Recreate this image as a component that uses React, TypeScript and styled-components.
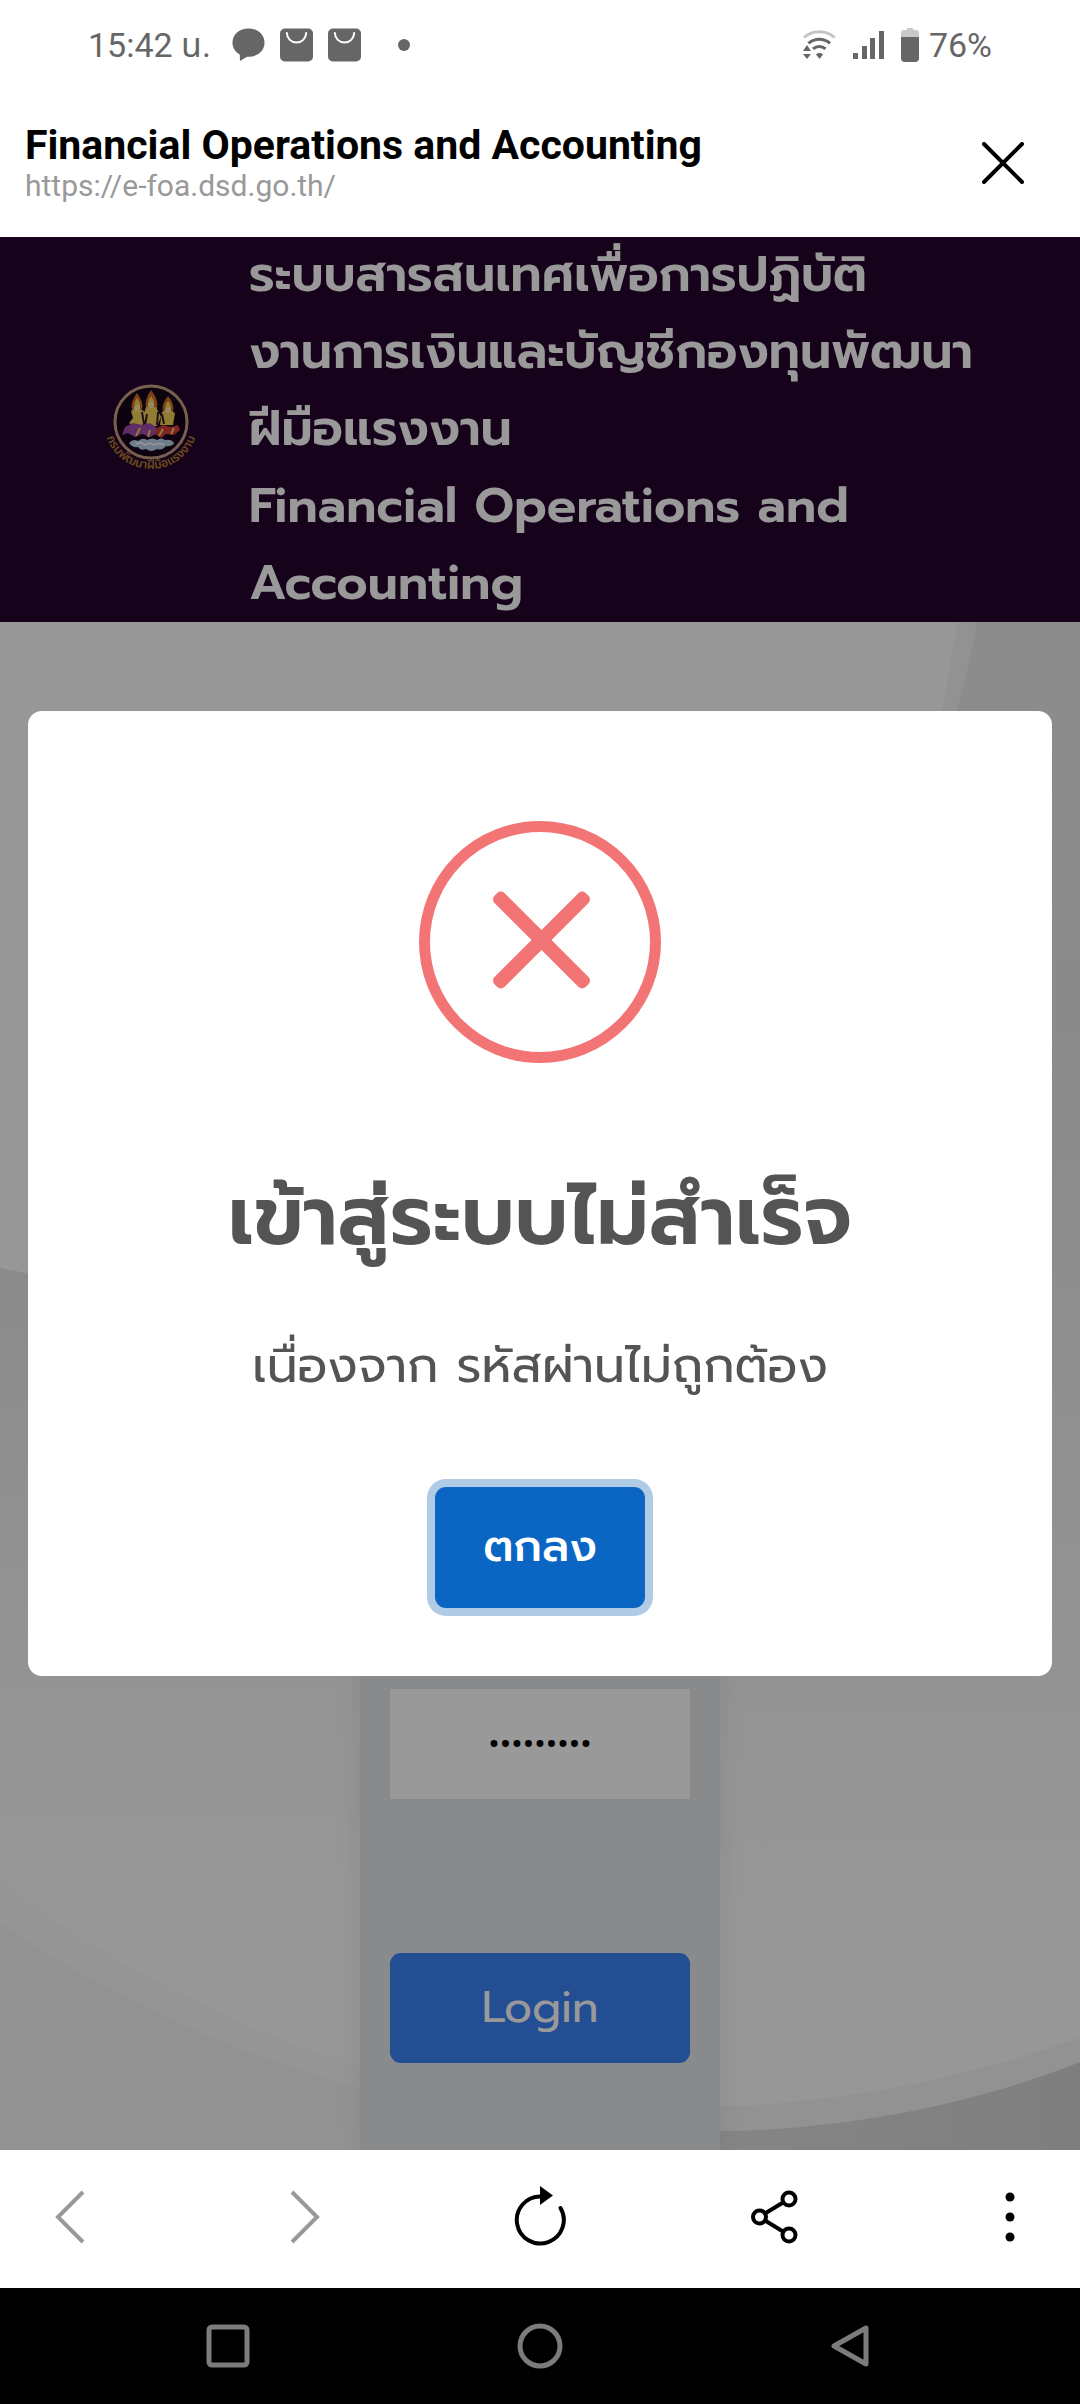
import React from 'react';
import styled, { createGlobalStyle } from 'styled-components';

const GlobalStyle = createGlobalStyle`
  *, *::before, *::after { box-sizing: border-box; }
  body { margin: 0; background: #fff; }
  button { font: inherit; border: 0; padding: 0; background: none; cursor: pointer; }
  svg { display: block; flex: none; }
`;

const thaiFont = `Prompt, "Noto Sans Thai", "Noto Sans", sans-serif`;
const systemFont = `Roboto, "Noto Sans Thai", sans-serif`;

const Screen = styled.div`
  display: flex;
  flex-direction: column;
  min-height: 100vh;
  font-family: ${systemFont};
`;

/* ---------- phone status bar ---------- */

const StatusBar = styled.div`
  display: flex;
  align-items: center;
  justify-content: space-between;
  height: 90px;
  padding: 0 88px;
  color: #666;
  font-size: 34px;
  line-height: 40px;
`;

const StatusGroup = styled.div<{ $gap: number }>`
  display: flex;
  align-items: center;
  gap: ${(p) => p.$gap}px;
`;

const Clock = styled.span`
  margin-right: 6px;
`;

const MoreDot = styled.span`
  width: 12px;
  height: 12px;
  margin-left: 22px;
  border-radius: 50%;
  background: #666;
`;

/* ---------- in-app browser header ---------- */

const AppBar = styled.header`
  display: flex;
  align-items: center;
  justify-content: space-between;
  height: 147px;
  padding: 0 45px 2px 25px;
`;

const PageTitle = styled.div`
  color: #000;
  font-size: 41px;
  font-weight: 700;
  line-height: 46px;
`;

const PageUrl = styled.div`
  color: #999;
  font-size: 30px;
  line-height: 36px;
`;

const IconButton = styled.button<{ $size: number }>`
  display: flex;
  align-items: center;
  justify-content: center;
  width: ${(p) => p.$size}px;
  height: ${(p) => p.$size}px;
`;

/* ---------- web page ---------- */

const WebView = styled.div`
  position: relative;
  display: flex;
  flex: 1;
  flex-direction: column;
  font-family: ${thaiFont};
`;

const SiteHeader = styled.header`
  display: flex;
  align-items: center;
  gap: 47px;
  padding: 0 102px;
  background: #26052e;
`;

const SiteTitle = styled.h1`
  margin: 0;
  color: #fff;
  font-size: 49px;
  font-weight: 600;
  line-height: 77px;
  white-space: nowrap;
`;

const Main = styled.main`
  position: relative;
  display: flex;
  flex: 1;
  justify-content: center;
  overflow: hidden;
  background: #fbfbfb;
`;

const Backdrop = styled.svg`
  position: absolute;
  inset: 0;
  width: 100%;
  height: 100%;
`;

const LoginPanel = styled.form`
  position: relative;
  display: flex;
  flex-direction: column;
  justify-content: flex-end;
  gap: 154px;
  width: 33.3333%;
  margin-top: 280px;
  padding: 30px 30px 87px;
  background: #e4e7e9;
  box-shadow: 0 0 28px rgba(0, 0, 0, 0.07);
`;

const PasswordInput = styled.input`
  width: 100%;
  height: 110px;
  border: 0;
  background: #fff;
  color: #000;
  font-family: ${systemFont};
  font-size: 34px;
  text-align: center;
`;

const LoginButton = styled.button`
  height: 110px;
  border-radius: 11px;
  background: #3b82f6;
  color: #fff;
  font-size: 44px;
  line-height: 66px;
`;

/* ---------- alert dialog ---------- */

const Overlay = styled.div`
  position: absolute;
  inset: 0;
  display: flex;
  align-items: center;
  justify-content: center;
  padding: 28px;
  background: rgba(0, 0, 0, 0.4);
`;

const Dialog = styled.div`
  display: flex;
  flex-direction: column;
  align-items: center;
  width: 100%;
  padding: 110px 44px 68px;
  border-radius: 14px;
  background: #fff;
  color: #545454;
  text-align: center;
`;

const DialogTitle = styled.h2`
  margin: 92px 0 0;
  font-size: 82px;
  font-weight: 600;
  line-height: 124px;
`;

const DialogText = styled.p`
  margin: 50px 0 0;
  font-size: 49px;
  line-height: 74px;
`;

const ConfirmButton = styled.button`
  margin-top: 84px;
  padding: 27px 48px 28px;
  border-radius: 11px;
  background: #0b66c3;
  box-shadow: 0 0 0 8px #b0cbe5;
  color: #fff;
  font-size: 44px;
  font-weight: 500;
  line-height: 66px;
`;

/* ---------- bottom bars ---------- */

const Toolbar = styled.nav`
  display: flex;
  align-items: center;
  justify-content: space-between;
  height: 138px;
  padding: 0 30px 4px;
  background: #fff;
`;

const SystemNav = styled.nav`
  display: flex;
  align-items: center;
  justify-content: space-around;
  height: 116px;
  padding: 0 72px;
  background: #000;
`;

const ChatIcon = () => (
  <svg width="33" height="34" viewBox="0 0 34 34" fill="#666">
    <path d="M17 0C7.600 0 .5 6.200.5 14.500c0 5.600 2.800 9.800 7.500 12.300L8.300 33.500 15.500 29.200C26 29.500 33.500 23.500 33.500 14.500 33.500 6.200 26.400 0 17 0z" />
  </svg>
);

const BagIcon = () => (
  <svg width="33" height="34" viewBox="0 0 34 34" fill="none">
    <rect width="34" height="34" rx="5" fill="#666" />
    <path d="M7 4.500c.3 6 4.500 10 10 10s9.700-4 10-10" stroke="#fff" strokeWidth="2" strokeLinecap="round" />
  </svg>
);

const WifiIcon = () => (
  <svg width="34" height="30" viewBox="0 0 34 30" fill="none" strokeWidth="3">
    <path d="M2 7.500C10.500-.2 24-.2 32.500 7.500" stroke="#c4c4c4" />
    <path d="M6.500 13.300c6-5.500 15.500-5.500 21.500 0M11 18.800c3.600-3.200 9-3.200 12.500 0" stroke="#666" />
    <path d="M5 15l4 6H1zM5 29l-4-5h8zM14 24.500a5 5 0 0 1 7 0L17.500 29z" fill="#666" />
  </svg>
);

const SignalIcon = () => (
  <svg width="31" height="28" viewBox="0 0 31 28" fill="#666">
    <path d="M0 22h5v6H0zM9 15h5v13H9zM17 7h5v21h-5zM26 0h5v28h-5z" />
  </svg>
);

const BatteryIcon = () => (
  <svg width="18" height="34" viewBox="0 0 18 34">
    <path d="M6 0h6v2h3a3 3 0 0 1 3 3v5H0V5a3 3 0 0 1 3-3h3z" fill="#c8c8c8" />
    <path d="M0 9h18v21a4 4 0 0 1-4 4H4a4 4 0 0 1-4-4z" fill="#666" />
  </svg>
);

const Emblem = () => (
  <svg width="100" height="92" viewBox="0 0 100 92" overflow="visible" role="img" aria-label="กรมพัฒนาฝีมือแรงงาน">
    <defs>
      <path id="emblem-arc" d="M2 38A47 47 0 0 0 96 38" />
    </defs>
    <circle cx="49" cy="38" r="36" fill="#16041c" stroke="#c9a183" strokeWidth="3" />
    <g fill="#d2691e">
      <path d="M35 9q-7 9-5 17h10q2-8-5-17zM49 6q-7 10-5 19h11q2-9-6-19zM66 12q-7 8-5 16h10q2-8-5-16z" />
    </g>
    <g fill="#f0cf55">
      <path d="M35 14q-4 5-2 9h5q1-4-3-9zM49 12q-4 6-2 10h5q1-5-3-10zM66 17q-4 4-2 8h5q1-4-3-8z" />
      <path d="M29 27l5-3 8 3 3 10-5 4-8 1-5-3 4-5zM44 23h10l5 10-4 9H44l-3-9zM60 28l6-3 7 4-2 12H58z" />
    </g>
    <g fill="#f7e6a0">
      <circle cx="35" cy="24" r="3" />
      <circle cx="49" cy="21" r="3" />
      <circle cx="66" cy="26" r="3" />
    </g>
    <path d="M40 28l2 12M45 30l-2 12M56 28l-1 13M60 30l2 10" stroke="#3a1c28" strokeWidth="2" fill="none" />
    <path d="M23 43l8-4 9 2 8-2 6 4 2 6-8 4-8-3-7 3-7-4-6 2z" fill="#a04cb0" />
    <path d="M53 45l8-4 8 2 7-2 2 5-6 5-8-1-5 4-6-4z" fill="#d13d3d" />
    <path d="M34 52l4-8M46 53l2-7M57 52l4-7M69 50l3-6" stroke="#f0cf55" strokeWidth="2" fill="none" />
    <path d="M27 59q4-5 9-2 5-4 9-1 6-3 10 0 5-3 8 0 8-1 9 4-4 3-8 2-4 5-9 3-6 4-11 0-6 2-8-2-6 1-9-4z" fill="#b7d0e4" />
    <path d="M34 60q5-3 9 1 5-3 9 0 5-3 10 0" stroke="#fff" strokeWidth="1.500" fill="none" />
    <text fill="#b37d30" fontSize="12" fontWeight="600" fontFamily={'"Noto Sans Thai", sans-serif'}>
      <textPath href="#emblem-arc" startOffset="50%" textAnchor="middle">กรมพัฒนาฝีมือแรงงาน</textPath>
    </text>
  </svg>
);

const PageBackdrop = () => (
  <Backdrop viewBox="0 0 1080 1528" preserveAspectRatio="none" aria-hidden="true">
    <defs>
      <linearGradient id="rightShade" x1="0" y1="0" x2="0" y2="1">
        <stop offset="0" stopColor="#e9e9e9" />
        <stop offset="0.3" stopColor="#e7e7e7" />
        <stop offset="1" stopColor="#fcfcfc" />
      </linearGradient>
      <linearGradient id="leftShade" x1="0" y1="0" x2="0" y2="1">
        <stop offset="0" stopColor="#e8e8e8" />
        <stop offset="0.6" stopColor="#f6f6f6" />
        <stop offset="1" stopColor="#fcfcfc" />
      </linearGradient>
      <linearGradient id="cornerShade" x1="0" y1="0" x2="1" y2="0">
        <stop offset="0" stopColor="#dedede" />
        <stop offset="1" stopColor="#d3d3d3" />
      </linearGradient>
    </defs>
    <rect width="1080" height="1528" fill="#fcfcfc" />
    <path d="M958 0H1080V1330H600C800 700 900 380 958 0z" fill="url(#rightShade)" />
    <path d="M958 0H977C969 42 963 66 957 89L700 900 942 89z" fill="#f4f4f4" />
    <path d="M0 646Q20 649 200 690L540 1000V1300H0z" fill="url(#leftShade)" />
    <path d="M0 1258C110 1343 230 1403 360 1445V1528H0z" fill="#f9f9f9" />
    <path d="M0 1301C100 1370 230 1430 360 1466V1528H0z" fill="#f4f4f4" />
    <path d="M720 1485C850 1480 980 1453 1080 1415V1528H720z" fill="#f4f4f4" />
    <path d="M720 1509C850 1508 980 1480 1080 1440V1528H720z" fill="url(#cornerShade)" />
  </Backdrop>
);

const ErrorIcon = () => (
  <svg width="242" height="242" viewBox="0 0 242 242" fill="#f27474" aria-hidden="true">
    <circle cx="121" cy="121" r="115.500" fill="none" stroke="#f27474" strokeWidth="11" />
    <rect x="58" y="112" width="129" height="14" rx="5" transform="rotate(45 122.500 119)" />
    <rect x="58" y="112" width="129" height="14" rx="5" transform="rotate(-45 122.500 119)" />
  </svg>
);

export default function App() {
  return (
    <Screen>
      <GlobalStyle />
      <StatusBar>
        <StatusGroup $gap={15}>
          <Clock>15:42 น.</Clock>
          <ChatIcon />
          <BagIcon />
          <BagIcon />
          <MoreDot />
        </StatusGroup>
        <StatusGroup $gap={17}>
          <WifiIcon />
          <SignalIcon />
          <StatusGroup $gap={10}>
            <BatteryIcon />
            <span>76%</span>
          </StatusGroup>
        </StatusGroup>
      </StatusBar>

      <AppBar>
        <div>
          <PageTitle>Financial Operations and Accounting</PageTitle>
          <PageUrl>https://e-foa.dsd.go.th/</PageUrl>
        </div>
        <IconButton $size={64} aria-label="Close">
          <svg width="42" height="42" viewBox="0 0 42 42" stroke="#000" strokeWidth="4" strokeLinecap="round">
            <path d="M2 2l38 38M40 2L2 40" />
          </svg>
        </IconButton>
      </AppBar>

      <WebView>
        <SiteHeader>
          <Emblem />
          <SiteTitle>
            ระบบสารสนเทศเพื่อการปฏิบัติ
            <br />
            งานการเงินและบัญชีกองทุนพัฒนา
            <br />
            ฝีมือแรงงาน
            <br />
            Financial Operations and
            <br />
            Accounting
          </SiteTitle>
        </SiteHeader>
        <Main>
          <PageBackdrop />
          <LoginPanel onSubmit={(e) => e.preventDefault()}>
            <PasswordInput type="password" aria-label="Password" defaultValue="123456789" />
            <LoginButton type="submit">Login</LoginButton>
          </LoginPanel>
        </Main>

        <Overlay>
          <Dialog role="alertdialog" aria-modal="true" aria-labelledby="alert-title" aria-describedby="alert-text">
            <ErrorIcon />
            <DialogTitle id="alert-title">เข้าสู่ระบบไม่สำเร็จ</DialogTitle>
            <DialogText id="alert-text">เนื่องจาก รหัสผ่านไม่ถูกต้อง</DialogText>
            <ConfirmButton type="button">ตกลง</ConfirmButton>
          </Dialog>
        </Overlay>
      </WebView>

      <Toolbar>
        <IconButton $size={80} aria-label="Back">
          <svg width="30" height="54" viewBox="0 0 30 54" fill="none" stroke="#999" strokeWidth="4">
            <path d="M28 2L3 27l25 25" />
          </svg>
        </IconButton>
        <IconButton $size={80} aria-label="Forward">
          <svg width="30" height="54" viewBox="0 0 30 54" fill="none" stroke="#999" strokeWidth="4">
            <path d="M2 2l25 25L2 52" />
          </svg>
        </IconButton>
        <IconButton $size={80} aria-label="Reload">
          <svg width="54" height="62" viewBox="0 0 54 62" fill="none" stroke="#000" strokeWidth="4">
            <path d="M28 10.500A23.500 23.500 0 1 0 47.500 22" strokeLinecap="round" />
            <path d="M27 0l13 9.500L27 19z" fill="#000" stroke="none" />
          </svg>
        </IconButton>
        <IconButton $size={80} aria-label="Share">
          <svg width="48" height="54" viewBox="0 0 48 54" fill="none" stroke="#000" strokeWidth="4">
            <circle cx="38" cy="9" r="6.500" />
            <circle cx="8.500" cy="27" r="6.500" />
            <circle cx="38" cy="45" r="6.500" />
            <path d="M14 23.500L32 12.500M14 30.500l18 11" />
          </svg>
        </IconButton>
        <IconButton $size={80} aria-label="More">
          <svg width="10" height="50" viewBox="0 0 10 50" fill="#000">
            <circle cx="5" cy="5" r="4.500" />
            <circle cx="5" cy="25" r="4.500" />
            <circle cx="5" cy="45" r="4.500" />
          </svg>
        </IconButton>
      </Toolbar>

      <SystemNav>
        <IconButton $size={80} aria-label="Recent apps">
          <svg width="44" height="44" viewBox="0 0 44 44" fill="none" stroke="#7c7c7c" strokeWidth="5">
            <rect x="3" y="3" width="38" height="38" rx="3" />
          </svg>
        </IconButton>
        <IconButton $size={80} aria-label="Home">
          <svg width="46" height="46" viewBox="0 0 46 46" fill="none" stroke="#7c7c7c" strokeWidth="5">
            <circle cx="23" cy="23" r="20" />
          </svg>
        </IconButton>
        <IconButton $size={80} aria-label="Go back">
          <svg width="44" height="44" viewBox="0 0 44 44" fill="none" stroke="#7c7c7c" strokeWidth="5" strokeLinejoin="round">
            <path d="M36 4v36L4 22z" />
          </svg>
        </IconButton>
      </SystemNav>
    </Screen>
  );
}
